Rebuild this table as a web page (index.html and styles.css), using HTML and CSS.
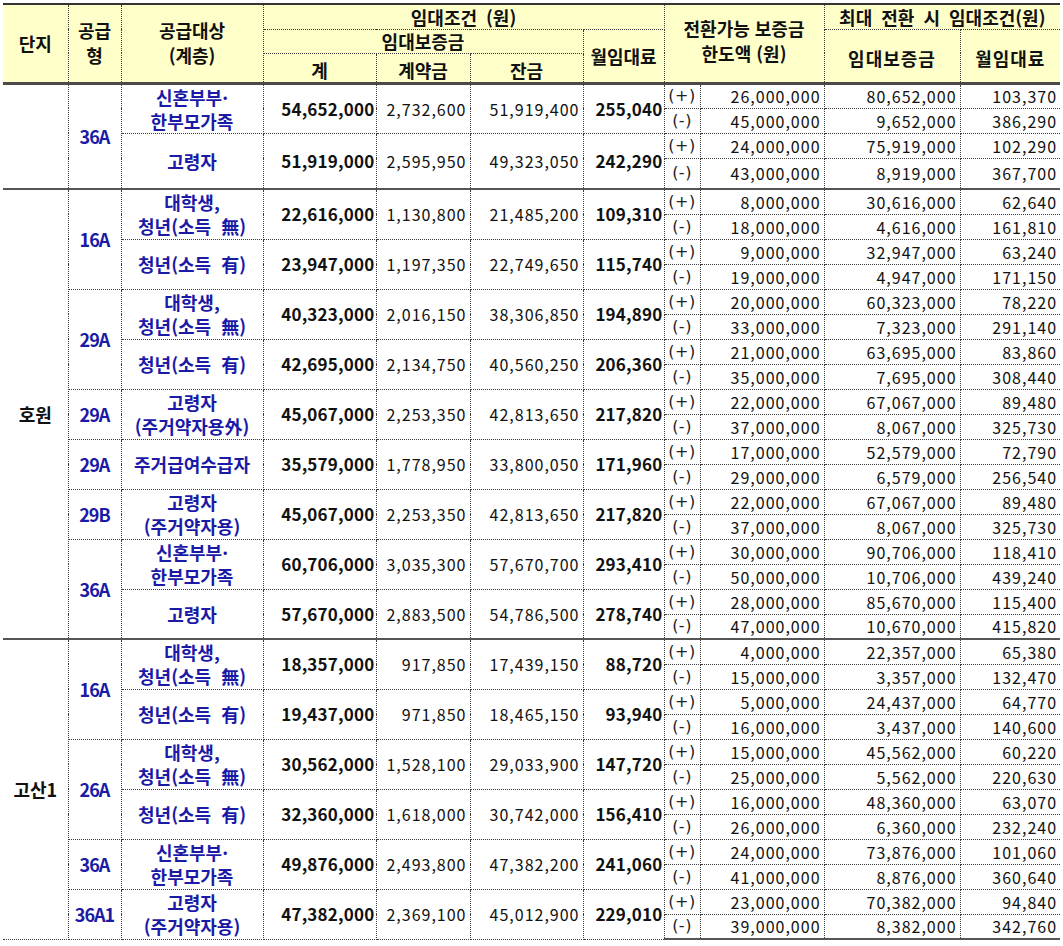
FILE: index.html
```html
<!DOCTYPE html>
<html lang="ko">
<head>
<meta charset="utf-8">
<title>임대조건</title>
<link rel="stylesheet" href="styles.css">
</head>
<body>
<table class="rent">
<colgroup>
<col class="c-site"><col class="c-type"><col class="c-target"><col class="c-sum"><col class="c-dep"><col class="c-bal"><col class="c-mon"><col class="c-sign"><col class="c-lim"><col class="c-maxdep"><col class="c-maxmon">
</colgroup>
<thead>
<tr class="h1">
<th rowspan="3">단지</th>
<th rowspan="3" class="two">공급<br>형</th>
<th rowspan="3" class="two">공급대상<br>(계층)</th>
<th colspan="4" class="spaced">임대조건 (원)</th>
<th colspan="2" rowspan="3" class="limit-h two">전환가능 보증금<br>한도액 (원)</th>
<th colspan="2" class="spaced">최대 전환 시 임대조건(원)</th>
</tr>
<tr class="h2">
<th colspan="3">임대보증금</th>
<th rowspan="2">월임대료</th>
<th rowspan="2" class="wide">임대보증금</th>
<th rowspan="2" class="wide">월임대료</th>
</tr>
<tr class="h3">
<th>계</th>
<th>계약금</th>
<th>잔금</th>
</tr>
</thead>
<tbody>
<!-- group 1 -->
<tr class="r gtop">
<td class="site" rowspan="4"></td>
<td class="type" rowspan="4">36A</td>
<td class="target" rowspan="2">신혼부부·<br>한부모가족</td>
<td class="num b" rowspan="2">54,652,000</td><td class="num" rowspan="2">2,732,600</td><td class="num" rowspan="2">51,919,400</td><td class="num b" rowspan="2">255,040</td>
<td class="sign">(+)</td><td class="num">26,000,000</td><td class="num">80,652,000</td><td class="num">103,370</td>
</tr>
<tr class="r"><td class="sign">(-)</td><td class="num">45,000,000</td><td class="num">9,652,000</td><td class="num">386,290</td></tr>
<tr class="r">
<td class="target" rowspan="2">고령자</td>
<td class="num b" rowspan="2">51,919,000</td><td class="num" rowspan="2">2,595,950</td><td class="num" rowspan="2">49,323,050</td><td class="num b" rowspan="2">242,290</td>
<td class="sign">(+)</td><td class="num">24,000,000</td><td class="num">75,919,000</td><td class="num">102,290</td>
</tr>
<tr class="r tall"><td class="sign">(-)</td><td class="num">43,000,000</td><td class="num">8,919,000</td><td class="num">367,700</td></tr>

<!-- 호원 -->
<tr class="r gtop">
<td class="site" rowspan="18">호원</td>
<td class="type" rowspan="4">16A</td>
<td class="target" rowspan="2">대학생,<br>청년(소득&nbsp; 無)</td>
<td class="num b" rowspan="2">22,616,000</td><td class="num" rowspan="2">1,130,800</td><td class="num" rowspan="2">21,485,200</td><td class="num b" rowspan="2">109,310</td>
<td class="sign">(+)</td><td class="num">8,000,000</td><td class="num">30,616,000</td><td class="num">62,640</td>
</tr>
<tr class="r"><td class="sign">(-)</td><td class="num">18,000,000</td><td class="num">4,616,000</td><td class="num">161,810</td></tr>
<tr class="r">
<td class="target" rowspan="2">청년(소득&nbsp; 有)</td>
<td class="num b" rowspan="2">23,947,000</td><td class="num" rowspan="2">1,197,350</td><td class="num" rowspan="2">22,749,650</td><td class="num b" rowspan="2">115,740</td>
<td class="sign">(+)</td><td class="num">9,000,000</td><td class="num">32,947,000</td><td class="num">63,240</td>
</tr>
<tr class="r"><td class="sign">(-)</td><td class="num">19,000,000</td><td class="num">4,947,000</td><td class="num">171,150</td></tr>

<tr class="r">
<td class="type" rowspan="4">29A</td>
<td class="target" rowspan="2">대학생,<br>청년(소득&nbsp; 無)</td>
<td class="num b" rowspan="2">40,323,000</td><td class="num" rowspan="2">2,016,150</td><td class="num" rowspan="2">38,306,850</td><td class="num b" rowspan="2">194,890</td>
<td class="sign">(+)</td><td class="num">20,000,000</td><td class="num">60,323,000</td><td class="num">78,220</td>
</tr>
<tr class="r"><td class="sign">(-)</td><td class="num">33,000,000</td><td class="num">7,323,000</td><td class="num">291,140</td></tr>
<tr class="r">
<td class="target" rowspan="2">청년(소득&nbsp; 有)</td>
<td class="num b" rowspan="2">42,695,000</td><td class="num" rowspan="2">2,134,750</td><td class="num" rowspan="2">40,560,250</td><td class="num b" rowspan="2">206,360</td>
<td class="sign">(+)</td><td class="num">21,000,000</td><td class="num">63,695,000</td><td class="num">83,860</td>
</tr>
<tr class="r"><td class="sign">(-)</td><td class="num">35,000,000</td><td class="num">7,695,000</td><td class="num">308,440</td></tr>

<tr class="r">
<td class="type" rowspan="2">29A</td>
<td class="target" rowspan="2">고령자<br>(주거약자용外)</td>
<td class="num b" rowspan="2">45,067,000</td><td class="num" rowspan="2">2,253,350</td><td class="num" rowspan="2">42,813,650</td><td class="num b" rowspan="2">217,820</td>
<td class="sign">(+)</td><td class="num">22,000,000</td><td class="num">67,067,000</td><td class="num">89,480</td>
</tr>
<tr class="r"><td class="sign">(-)</td><td class="num">37,000,000</td><td class="num">8,067,000</td><td class="num">325,730</td></tr>

<tr class="r">
<td class="type" rowspan="2">29A</td>
<td class="target" rowspan="2">주거급여수급자</td>
<td class="num b" rowspan="2">35,579,000</td><td class="num" rowspan="2">1,778,950</td><td class="num" rowspan="2">33,800,050</td><td class="num b" rowspan="2">171,960</td>
<td class="sign">(+)</td><td class="num">17,000,000</td><td class="num">52,579,000</td><td class="num">72,790</td>
</tr>
<tr class="r"><td class="sign">(-)</td><td class="num">29,000,000</td><td class="num">6,579,000</td><td class="num">256,540</td></tr>

<tr class="r">
<td class="type" rowspan="2">29B</td>
<td class="target" rowspan="2">고령자<br>(주거약자용)</td>
<td class="num b" rowspan="2">45,067,000</td><td class="num" rowspan="2">2,253,350</td><td class="num" rowspan="2">42,813,650</td><td class="num b" rowspan="2">217,820</td>
<td class="sign">(+)</td><td class="num">22,000,000</td><td class="num">67,067,000</td><td class="num">89,480</td>
</tr>
<tr class="r"><td class="sign">(-)</td><td class="num">37,000,000</td><td class="num">8,067,000</td><td class="num">325,730</td></tr>

<tr class="r">
<td class="type" rowspan="4">36A</td>
<td class="target" rowspan="2">신혼부부·<br>한부모가족</td>
<td class="num b" rowspan="2">60,706,000</td><td class="num" rowspan="2">3,035,300</td><td class="num" rowspan="2">57,670,700</td><td class="num b" rowspan="2">293,410</td>
<td class="sign">(+)</td><td class="num">30,000,000</td><td class="num">90,706,000</td><td class="num">118,410</td>
</tr>
<tr class="r"><td class="sign">(-)</td><td class="num">50,000,000</td><td class="num">10,706,000</td><td class="num">439,240</td></tr>
<tr class="r">
<td class="target" rowspan="2">고령자</td>
<td class="num b" rowspan="2">57,670,000</td><td class="num" rowspan="2">2,883,500</td><td class="num" rowspan="2">54,786,500</td><td class="num b" rowspan="2">278,740</td>
<td class="sign">(+)</td><td class="num">28,000,000</td><td class="num">85,670,000</td><td class="num">115,400</td>
</tr>
<tr class="r"><td class="sign">(-)</td><td class="num">47,000,000</td><td class="num">10,670,000</td><td class="num">415,820</td></tr>

<!-- 고산1 -->
<tr class="r gtop">
<td class="site" rowspan="12">고산1</td>
<td class="type" rowspan="4">16A</td>
<td class="target" rowspan="2">대학생,<br>청년(소득&nbsp; 無)</td>
<td class="num b" rowspan="2">18,357,000</td><td class="num" rowspan="2">917,850</td><td class="num" rowspan="2">17,439,150</td><td class="num b" rowspan="2">88,720</td>
<td class="sign">(+)</td><td class="num">4,000,000</td><td class="num">22,357,000</td><td class="num">65,380</td>
</tr>
<tr class="r"><td class="sign">(-)</td><td class="num">15,000,000</td><td class="num">3,357,000</td><td class="num">132,470</td></tr>
<tr class="r">
<td class="target" rowspan="2">청년(소득&nbsp; 有)</td>
<td class="num b" rowspan="2">19,437,000</td><td class="num" rowspan="2">971,850</td><td class="num" rowspan="2">18,465,150</td><td class="num b" rowspan="2">93,940</td>
<td class="sign">(+)</td><td class="num">5,000,000</td><td class="num">24,437,000</td><td class="num">64,770</td>
</tr>
<tr class="r"><td class="sign">(-)</td><td class="num">16,000,000</td><td class="num">3,437,000</td><td class="num">140,600</td></tr>

<tr class="r">
<td class="type" rowspan="4">26A</td>
<td class="target" rowspan="2">대학생,<br>청년(소득&nbsp; 無)</td>
<td class="num b" rowspan="2">30,562,000</td><td class="num" rowspan="2">1,528,100</td><td class="num" rowspan="2">29,033,900</td><td class="num b" rowspan="2">147,720</td>
<td class="sign">(+)</td><td class="num">15,000,000</td><td class="num">45,562,000</td><td class="num">60,220</td>
</tr>
<tr class="r"><td class="sign">(-)</td><td class="num">25,000,000</td><td class="num">5,562,000</td><td class="num">220,630</td></tr>
<tr class="r">
<td class="target" rowspan="2">청년(소득&nbsp; 有)</td>
<td class="num b" rowspan="2">32,360,000</td><td class="num" rowspan="2">1,618,000</td><td class="num" rowspan="2">30,742,000</td><td class="num b" rowspan="2">156,410</td>
<td class="sign">(+)</td><td class="num">16,000,000</td><td class="num">48,360,000</td><td class="num">63,070</td>
</tr>
<tr class="r"><td class="sign">(-)</td><td class="num">26,000,000</td><td class="num">6,360,000</td><td class="num">232,240</td></tr>

<tr class="r">
<td class="type" rowspan="2">36A</td>
<td class="target" rowspan="2">신혼부부·<br>한부모가족</td>
<td class="num b" rowspan="2">49,876,000</td><td class="num" rowspan="2">2,493,800</td><td class="num" rowspan="2">47,382,200</td><td class="num b" rowspan="2">241,060</td>
<td class="sign">(+)</td><td class="num">24,000,000</td><td class="num">73,876,000</td><td class="num">101,060</td>
</tr>
<tr class="r"><td class="sign">(-)</td><td class="num">41,000,000</td><td class="num">8,876,000</td><td class="num">360,640</td></tr>

<tr class="r">
<td class="type" rowspan="2">36A1</td>
<td class="target" rowspan="2">고령자<br>(주거약자용)</td>
<td class="num b" rowspan="2">47,382,000</td><td class="num" rowspan="2">2,369,100</td><td class="num" rowspan="2">45,012,900</td><td class="num b" rowspan="2">229,010</td>
<td class="sign">(+)</td><td class="num">23,000,000</td><td class="num">70,382,000</td><td class="num">94,840</td>
</tr>
<tr class="r last"><td class="sign">(-)</td><td class="num">39,000,000</td><td class="num">8,382,000</td><td class="num">342,760</td></tr>
</tbody>
</table>
</body>
</html>
```

FILE: styles.css
```css
html, body {
  margin: 0;
  padding: 0;
  background: #ffffff;
}

body {
  font-family: "Noto Sans CJK KR", "Noto Sans", sans-serif;
  color: #111111;
}

.rent {
  border-collapse: collapse;
  table-layout: fixed;
  width: 1057px;
  margin: 3px 0 0 3px;
}

.c-site { width: 65px; }
.c-type { width: 53px; }
.c-target { width: 142px; }
.c-sum { width: 113px; }
.c-dep { width: 94px; }
.c-bal { width: 113px; }
.c-mon { width: 81px; }
.c-sign { width: 36px; }
.c-lim { width: 124px; }
.c-maxdep { width: 136px; }
.c-maxmon { width: 100px; }

.rent th,
.rent td {
  border: 1px dotted #3c3c3c;
  padding: 0;
  vertical-align: middle;
}

.rent tr > :first-child { border-left: none; }
.rent tr > :last-child { border-right: none; }

/* header */
.rent thead th {
  background: #ffffca;
  font-weight: 700;
  font-size: 18px;
  line-height: 22px;
  text-align: center;
  color: #111111;
  white-space: nowrap;
}

.rent thead th.two { line-height: 25px; }
.rent thead th.spaced { word-spacing: 4px; }

.rent thead .h1 th { border-top: 2px solid #333333; }
.rent thead .h1 { height: 25px; }
.rent thead .h2 { height: 24px; }
.rent thead .h3 { height: 30px; }
.rent thead .h3 th { padding-top: 5px; }
.rent thead .limit-h { padding-bottom: 4px; }
.rent thead .wide { letter-spacing: 1px; padding-top: 4px; }

.rent thead tr:last-child th,
.rent thead th[rowspan="3"],
.rent thead th[rowspan="2"] {
  border-bottom: 3px solid #4a4a4a;
}

/* body */
.rent tbody .r { height: 25px; }
.rent tbody .r.tall { height: 31px; }
.rent tbody .gtop td { border-top: 2px solid #555555; }
.rent tbody tr.last td { border-bottom: 2px solid #555555; }

.site {
  text-align: center;
  font-weight: 700;
  font-size: 18px;
  color: #111111;
}

.type {
  text-align: center;
  font-weight: 700;
  font-size: 18px;
  letter-spacing: -1px;
  color: #1a1aa6;
}

.target {
  text-align: center;
  font-weight: 700;
  font-size: 18px;
  line-height: 24px;
  color: #1a1aa6;
  white-space: nowrap;
}

.num {
  text-align: right;
  padding-right: 3px !important;
  font-size: 16px;
  letter-spacing: 1px;
  line-height: 20px;
  color: #111111;
  white-space: nowrap;
}

.num.b {
  font-weight: 700;
  font-size: 17px;
  letter-spacing: 0.2px;
  padding-right: 1px !important;
}

.sign {
  text-align: center;
  font-family: "DejaVu Sans", sans-serif;
  font-size: 16px;
  line-height: 20px;
  letter-spacing: 0.5px;
  color: #222222;
  font-weight: 400;
}
```
